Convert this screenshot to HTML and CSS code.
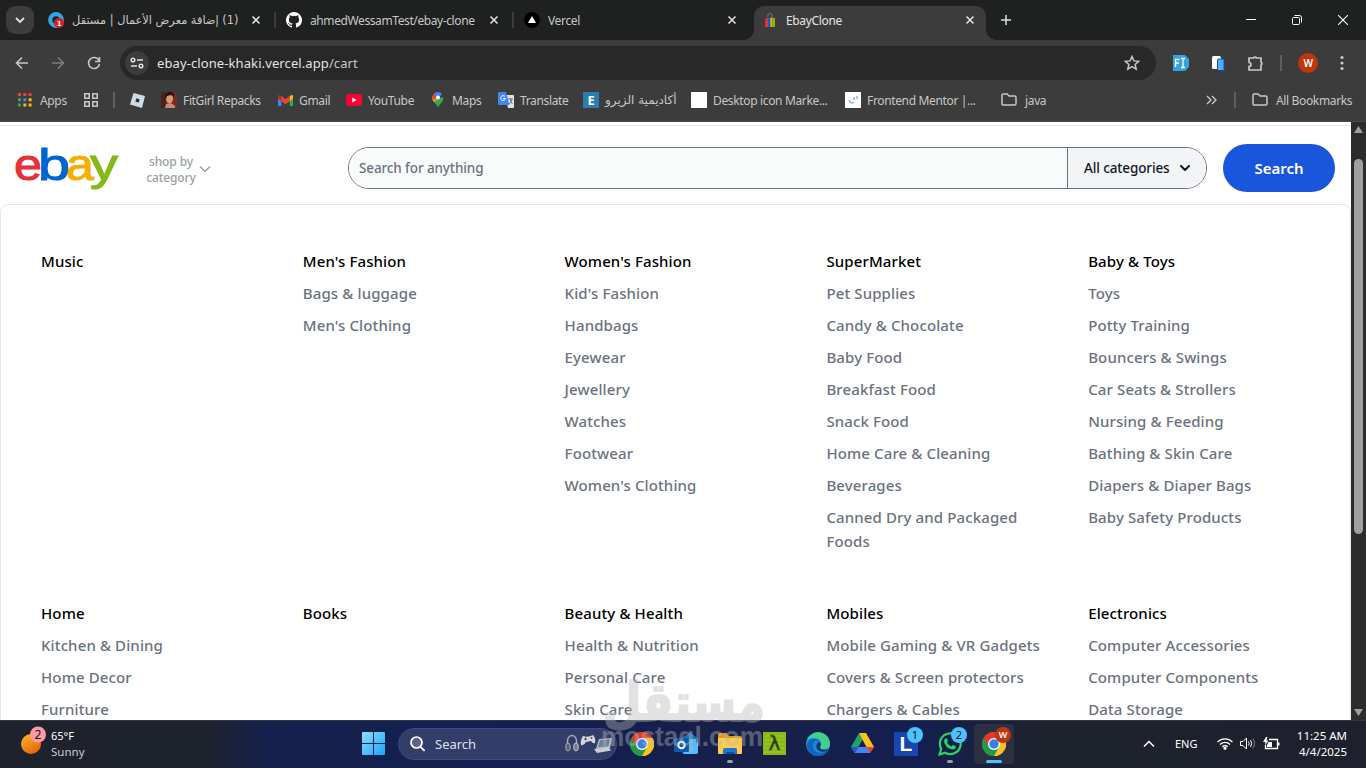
FILE: index.html
```html
<!DOCTYPE html>
<html lang="en">

<head>
  <meta charset="UTF-8">
  <meta name="viewport" content="width=device-width, initial-scale=1.0">
  <title>EbayClone</title>
  <link rel="stylesheet" href="styles.css">
</head>

<body>
  <!-- shared icons -->
  <svg class="sprite" aria-hidden="true">
    <symbol id="close" viewBox="0 0 10 10"><path d="M1.500 1.500l7 7M8.500 1.500l-7 7" stroke="#dedede" stroke-width="1.600" /></symbol>
    <symbol id="folder" viewBox="0 0 16 14"><path d="M1 2.200q0-1.200 1.200-1.200h4l1.800 2h5.800q1.200 0 1.200 1.200v6.600q0 1.200-1.200 1.200H2.200Q1 12 1 10.800z" fill="none" stroke="#c7c7c7" stroke-width="1.500" /></symbol>
    <symbol id="chrome" viewBox="0 0 24 24">
      <path d="M12 12L1.600 6A12 12 0 0 1 22.400 6z" fill="#e33b2e" />
      <path d="M12 12L22.400 6A12 12 0 0 1 12 24z" fill="#fcc31e" />
      <path d="M12 12L12 24A12 12 0 0 1 1.600 6z" fill="#249a46" />
      <path d="M12 6h10.400A12 12 0 0 1 12 24l5.200-9z" fill="#fcc31e" />
      <path d="M1.600 6l5.200 9L12 18l5.200-3L12 24A12 12 0 0 1 1.600 6z" fill="#249a46" />
      <path d="M1.600 6A12 12 0 0 1 22.400 6H12a6 6 0 0 0-5.200 9z" fill="#e33b2e" />
      <circle cx="12" cy="12" r="6" fill="#fff" />
      <circle cx="12" cy="12" r="4.700" fill="#3b7de9" />
    </symbol>
  </svg>

  <div class="browser">
    <div class="tab-strip">
      <button class="tab-search"><svg width="10" height="8" viewBox="0 0 10 8"><path d="M1 2l4 4 4-4" fill="none" stroke="#e3e3e3" stroke-width="1.800" /></svg></button>
      <div class="tab">
        <svg width="16" height="16" viewBox="0 0 16 16"><circle cx="8" cy="8" r="5.800" fill="none" stroke="#2fa8e6" stroke-width="4.200" /><circle cx="11" cy="11" r="5" fill="#d91f26" /><text x="11" y="14" class="badge-num">1</text></svg>
        <span class="tab-title arabic tab-title-ar" dir="rtl">(1) إضافة معرض الأعمال | مستقل</span>
        <svg class="close" width="10" height="10"><use href="#close" /></svg>
      </div>
      <div class="tab">
        <svg width="16" height="16" viewBox="0 0 16 16"><path fill="#fff" d="M8 0a8 8 0 0 0-2.530 15.590c.4.070.55-.17.550-.38v-1.500c-2.230.5-2.700-.94-2.700-.94-.360-.93-.89-1.170-.89-1.170-.73-.5.050-.49.050-.49.810.06 1.230.83 1.230.83.720 1.230 1.880.87 2.330.670.070-.52.280-.87.510-1.070-1.780-.2-3.640-.89-3.640-3.950 0-.87.310-1.590.82-2.150-.080-.2-.36-1.020.080-2.120 0 0 .67-.21 2.200.82a7.600 7.600 0 0 1 4 0c1.530-1.040 2.200-.82 2.200-.82.440 1.100.160 1.920.080 2.120.510.560.82 1.270.82 2.150 0 3.070-1.870 3.750-3.650 3.950.290.250.540.730.540 1.480v2.200c0 .21.150.46.550.38A8 8 0 0 0 8 0z" /></svg>
        <span class="tab-title repo">ahmedWessamTest/ebay-clone</span>
        <svg class="close" width="10" height="10"><use href="#close" /></svg>
      </div>
      <div class="tab no-line">
        <svg width="16" height="16" viewBox="0 0 16 16"><circle cx="8" cy="8" r="8" fill="#000" /><path d="M8 4l4 7H4z" fill="#fff" /></svg>
        <span class="tab-title">Vercel</span>
        <svg class="close" width="10" height="10"><use href="#close" /></svg>
      </div>
      <div class="tab active">
        <svg width="16" height="16" viewBox="0 0 16 16"><path d="M5.500 5a2.500 3.500 0 0 1 5 0" fill="none" stroke="#777" /><path d="M3.400 6h2.600v9H3z" fill="#e53238" /><path d="M6 5.500h2.300V15H6z" fill="#0064d2" /><path d="M8.300 5.500h2.200V15H8.300z" fill="#f5af02" /><path d="M10.500 6H13v9h-2.500z" fill="#86b817" /></svg>
        <span class="tab-title">EbayClone</span>
        <svg class="close" width="10" height="10"><use href="#close" /></svg>
      </div>
      <svg class="new-tab" width="12" height="12" viewBox="0 0 12 12"><path d="M6 1v10M1 6h10" stroke="#dedede" stroke-width="1.500" /></svg>
      <div class="window-buttons">
        <svg width="10" height="10" viewBox="0 0 10 10"><path d="M0 4.500h10" stroke="#fff" /></svg>
        <svg width="10" height="10" viewBox="0 0 10 10"><rect x=".5" y="2.500" width="7" height="7" rx="1" fill="none" stroke="#fff" /><path d="M2.500 .5h5a2 2 0 0 1 2 2v5" fill="none" stroke="#fff" /></svg>
        <svg width="10" height="10" viewBox="0 0 10 10"><path d="M0 0l10 10M10 0L0 10" stroke="#fff" stroke-width="1.100" /></svg>
      </div>
    </div>

    <div class="toolbar">
      <svg width="14" height="14" viewBox="0 0 14 14"><path d="M13 7H2M7 1.500L1.500 7 7 12.500" fill="none" stroke="#c7c7c7" stroke-width="1.600" /></svg>
      <svg width="14" height="14" viewBox="0 0 14 14"><path d="M1 7h11M7 1.500L12.500 7 7 12.500" fill="none" stroke="#7d7d7d" stroke-width="1.600" /></svg>
      <svg width="14" height="14" viewBox="0 0 14 14"><path d="M12 4.500A5.500 5.500 0 1 0 12.500 8M12.500 1v4.500H8" fill="none" stroke="#c7c7c7" stroke-width="1.600" /></svg>
      <div class="omnibox">
        <span class="site-info"><svg width="14" height="12" viewBox="0 0 14 12" fill="none" stroke="#dedede" stroke-width="1.500"><circle cx="3" cy="3" r="1.800" /><path d="M7 3h6M1 9h6" /><circle cx="11" cy="9" r="1.800" /></svg></span>
        <span class="url">ebay-clone-khaki.vercel.app<em>/cart</em></span>
        <svg class="star" width="16" height="16" viewBox="0 0 16 16"><path d="M8 1.500l1.900 4.400 4.800.4-3.600 3.200 1.100 4.700L8 11.700l-4.200 2.500 1.100-4.700L1.300 6.300l4.800-.4z" fill="none" stroke="#c7c7c7" stroke-width="1.500" /></svg>
      </div>
      <svg width="16" height="16" viewBox="0 0 16 16"><path d="M0 0h12l4 4v8l-4 4H0z" fill="#37a5dd" /><path d="M2.500 12V4.500h4M2.500 8h3.500M8 3.500h4M8 12.500h4M10 3.500v9" fill="none" stroke="#fff" stroke-width="1.300" /></svg>
      <svg width="14" height="16" viewBox="0 0 14 16"><rect x="1" y="1" width="9" height="13" rx="1.500" fill="#fff" /><rect x="6.500" y="4" width="6.500" height="11.500" rx="1" fill="#55aaf9" stroke="#1b4da0" /></svg>
      <svg width="17" height="17" viewBox="0 0 17 17"><path d="M2 3h4.500a1.700 1.700 0 0 1 3 0H14v4.300a1.700 1.700 0 0 1 0 3V15H2v-3.500a2 2 0 0 0 0-4z" fill="none" stroke="#c7c7c7" stroke-width="1.700" /></svg>
      <i class="divider"></i>
      <span class="avatar">W</span>
      <svg width="4" height="16" viewBox="0 0 4 16" fill="#c7c7c7"><circle cx="2" cy="2.500" r="1.600" /><circle cx="2" cy="8" r="1.600" /><circle cx="2" cy="13.500" r="1.600" /></svg>
    </div>

    <div class="bookmarks">
      <span class="bookmark apps"><svg width="14" height="14" viewBox="0 0 14 14"><path d="M0 0h3v3H0zM5.300 0h3v3h-3zM10.600 0h3v3h-3z" fill="#ea4335" /><path d="M0 5.300h3v3H0zM0 10.600h3v3H0z" fill="#34a853" /><path d="M5.300 5.300h3v3h-3z" fill="#4285f4" /><path d="M10.600 5.300h3v3h-3zM10.600 10.600h3v3h-3zM5.300 10.600h3v3h-3z" fill="#fbbc04" /></svg>Apps</span>
      <span class="bookmark"><svg width="14" height="14" viewBox="0 0 14 14"><path d="M.8.800h4.400v4.400H.8zM8.800.800h4.400v4.400H8.800zM.8 8.800h4.400v4.400H.8zM8.800 8.800h4.400v4.400H8.800z" fill="none" stroke="#c7c7c7" stroke-width="1.600" /></svg></span>
      <i class="divider"></i>
      <span class="bookmark"><svg width="15" height="15" viewBox="0 0 15 15"><path d="M3.500 0L15 3l-3 12L0 11.500z" fill="#cfdbe4" /><path d="M6.300 5.300l3.400.9-.9 3.400-3.400-.9z" fill="#333" /></svg></span>
      <span class="bookmark"><svg width="16" height="16" viewBox="0 0 16 16"><path d="M0 0h16v16H0z" fill="#7d2a22" /><path d="M0 0h5v16H0z" fill="#4b2220" /><ellipse cx="8.500" cy="6.500" rx="3.500" ry="5" fill="#d69a76" /><path d="M4 5q0-5 5-5t4 5l-3-2-4 1-1 3z" fill="#261615" /><path d="M5 12l5-1 4 3v2H4z" fill="#c38c6f" /></svg>FitGirl Repacks</span>
      <span class="bookmark gmail"><svg width="15" height="11" viewBox="0 0 15 11"><path d="M0 1.500v9.500h3.300V4z" fill="#4285f4" /><path d="M15 1.500v9.500h-3.300V4z" fill="#34a853" /><path d="M11.700.800L15 0v3.500l-3.300 2.700z" fill="#fbbc04" /><path d="M0 0l3.300.8v5.400L0 3.500z" fill="#c5221f" /><path d="M3.300.800l4.200 3.400L11.700.800v5.400L7.500 9.300 3.300 6.200z" fill="#ea4335" /></svg>Gmail</span>
      <span class="bookmark"><svg width="16" height="12" viewBox="0 0 16 12"><rect width="16" height="12" rx="3" fill="#f03" /><path d="M6.300 3.500v5L10.500 6z" fill="#fff" /></svg>YouTube</span>
      <span class="bookmark maps"><svg width="12" height="16" viewBox="0 0 12 16"><path d="M6 16C5 12 .5 10 .5 5.500h11C11.500 10 7 12 6 16z" fill="#34a853" /><path d="M6 6L2 10Q0 8 .5 4z" fill="#fbbc04" /><path d="M.5 6Q.2 1 5 .2L6 6 2 8z" fill="#ea4335" /><path d="M2 2Q6-2 10 2L6 6z" fill="#4285f4" /><circle cx="6" cy="5.500" r="2" fill="#fff" /></svg>Maps</span>
      <span class="bookmark"><svg width="16" height="16" viewBox="0 0 16 16"><path d="M7 3h8q1 0 1 1v11q0 1-1 1h-5z" fill="#dfe3e8" /><path d="M1 0h7l3.500 13H1q-1 0-1-1V1q0-1 1-1z" fill="#4285f4" /><path d="M7 4.500a2.400 2.400 0 1 0 .5 2H5.200" fill="none" stroke="#fff" /><path d="M10 7h5M12.500 6v1q0 3 2 5M14 7q0 3-3 5" fill="none" stroke="#6c7b8b" /></svg>Translate</span>
      <span class="bookmark"><b class="elzero">E</b><span class="arabic ar-mark" dir="rtl">أكاديمية الزيرو</span></span>
      <span class="bookmark"><b class="blank"></b>Desktop icon Marke...</span>
      <span class="bookmark"><svg width="16" height="16" viewBox="0 0 16 16"><path d="M0 0h16v16H0z" fill="#fff" /><path d="M4 8q1 4 5 2.500M9 5v3M12 4v3" fill="none" stroke="#8bb8d8" stroke-width="1.500" /></svg>Frontend Mentor |...</span>
      <span class="bookmark java"><svg width="16" height="14"><use href="#folder" /></svg>java</span>
      <span class="bookmark"><svg width="16" height="10" viewBox="0 0 16 10"><path d="M2 1l4 4-4 4M7 1l4 4-4 4" fill="none" stroke="#c7c7c7" stroke-width="1.400" /></svg></span>
      <i class="divider"></i>
      <span class="bookmark java"><svg width="16" height="14"><use href="#folder" /></svg>All Bookmarks</span>
    </div>
  </div>

  <div class="viewport">
    <div class="page">
      <header class="header">
        <svg class="logo" width="106" height="46" viewBox="0 0 106 46">
          <text x="-1" y="36" textLength="28" lengthAdjust="spacingAndGlyphs" fill="#e53238" stroke="#e53238">e</text>
          <text x="23" y="36" textLength="32" lengthAdjust="spacingAndGlyphs" fill="#0064d2" stroke="#0064d2">b</text>
          <text x="51" y="36" textLength="28" lengthAdjust="spacingAndGlyphs" fill="#f5af02" stroke="#f5af02">a</text>
          <text x="75" y="36" textLength="28" lengthAdjust="spacingAndGlyphs" fill="#86b817" stroke="#86b817">y</text>
        </svg>
        <button class="shop-by">
          <span>shop by<br>category</span>
          <svg width="12" height="8" viewBox="0 0 12 8"><path d="M1 1.500l5 5 5-5" fill="none" stroke="#98a2a3" stroke-width="1.500" /></svg>
        </button>
        <form class="search">
          <span class="search-input">Search for anything</span>
          <span class="search-category">All categories <svg width="10" height="7" viewBox="0 0 10 7"><path d="M1 1l4 4 4-4" fill="none" stroke="#111928" stroke-width="2" stroke-linecap="round" stroke-linejoin="round" /></svg></span>
        </form>
        <button class="search-btn">Search</button>
      </header>

      <section class="categories">
        <ul>
          <li class="title">Music</li>
        </ul>
        <ul>
          <li class="title">Men's Fashion</li>
          <li>Bags &amp; luggage</li>
          <li>Men's Clothing</li>
        </ul>
        <ul>
          <li class="title">Women's Fashion</li>
          <li>Kid's Fashion</li>
          <li>Handbags</li>
          <li>Eyewear</li>
          <li>Jewellery</li>
          <li>Watches</li>
          <li>Footwear</li>
          <li>Women's Clothing</li>
        </ul>
        <ul>
          <li class="title">SuperMarket</li>
          <li>Pet Supplies</li>
          <li>Candy &amp; Chocolate</li>
          <li>Baby Food</li>
          <li>Breakfast Food</li>
          <li>Snack Food</li>
          <li>Home Care &amp; Cleaning</li>
          <li>Beverages</li>
          <li>Canned Dry and Packaged Foods</li>
        </ul>
        <ul>
          <li class="title">Baby &amp; Toys</li>
          <li>Toys</li>
          <li>Potty Training</li>
          <li>Bouncers &amp; Swings</li>
          <li>Car Seats &amp; Strollers</li>
          <li>Nursing &amp; Feeding</li>
          <li>Bathing &amp; Skin Care</li>
          <li>Diapers &amp; Diaper Bags</li>
          <li>Baby Safety Products</li>
        </ul>
        <ul>
          <li class="title">Home</li>
          <li>Kitchen &amp; Dining</li>
          <li>Home Decor</li>
          <li>Furniture</li>
        </ul>
        <ul>
          <li class="title">Books</li>
        </ul>
        <ul>
          <li class="title">Beauty &amp; Health</li>
          <li>Health &amp; Nutrition</li>
          <li>Personal Care</li>
          <li>Skin Care</li>
        </ul>
        <ul>
          <li class="title">Mobiles</li>
          <li>Mobile Gaming &amp; VR Gadgets</li>
          <li>Covers &amp; Screen protectors</li>
          <li>Chargers &amp; Cables</li>
        </ul>
        <ul>
          <li class="title">Electronics</li>
          <li>Computer Accessories</li>
          <li>Computer Components</li>
          <li>Data Storage</li>
        </ul>
      </section>
    </div>
    <div class="scrollbar">
      <svg width="9" height="7" viewBox="0 0 9 7"><path d="M4.500 0L9 7H0z" fill="#9f9f9f" /></svg>
      <div class="thumb"></div>
      <svg width="9" height="7" viewBox="0 0 9 7"><path d="M4.500 7L9 0H0z" fill="#9f9f9f" /></svg>
    </div>
  </div>

  <div class="taskbar">
    <div class="weather">
      <svg width="28" height="30" viewBox="0 0 28 30"><defs><linearGradient id="sun" x2=".6" y2="1"><stop stop-color="#fbb72b" /><stop offset="1" stop-color="#e8660c" /></linearGradient></defs><circle cx="11" cy="18" r="10" fill="url(#sun)" /><circle cx="18" cy="8.500" r="8" fill="#ff99a4" /><text x="18" y="13" class="task-num">2</text></svg>
      <div>65°F<br><span>Sunny</span></div>
    </div>
    <svg class="start" width="23" height="23" viewBox="0 0 24 24"><defs><linearGradient id="win" x2="1" y2="1"><stop stop-color="#8edcff" /><stop offset="1" stop-color="#18a6f5" /></linearGradient></defs><path d="M1 0h10.500v11.500H0V1q0-1 1-1zM12.500 0H23q1 0 1 1v10.500H12.500zM0 12.500h11.500V24H1q-1 0-1-1zM12.500 12.500H24V23q0 1-1 1H12.500z" fill="url(#win)" /></svg>
    <div class="task-search">
      <svg width="15" height="16" viewBox="0 0 15 16"><circle cx="6.500" cy="6.500" r="5.500" fill="#59648a" stroke="#fff" stroke-width="1.700" /><path d="M10.500 10.800l4 4" stroke="#fff" stroke-width="1.800" /></svg>
      <span>Search</span>
      <svg class="search-art" width="48" height="22" viewBox="0 0 48 22"><path d="M2.500 12v-4a4.500 5.500 0 0 1 9 0v4" fill="none" stroke="#a7a9b0" stroke-width="1.500" /><ellipse cx="3" cy="14" rx="2.300" ry="4" fill="#5c606e" stroke="#aaa" /><ellipse cx="11" cy="14" rx="2.300" ry="4" fill="#76798a" stroke="#ccc" /><path d="M18 3q5 2 10-1 3 3 2 8-2 1-4-2l-5 1q-2 4-5 3-1-5 2-9z" fill="#d5d7dc" /><path d="M19 6h3M20.500 4.500v3" stroke="#555" /><circle cx="26.500" cy="5" r="1" fill="#555" /><path d="M34 6l13-1-2 10-14 1z" fill="#b3bfca" /><path d="M35 7l10-.8-1.500 7-10.500 1z" fill="#6b8193" /><path d="M29 16l15-1.500 2 3-14 2.500z" fill="#cbced3" /></svg>
    </div>
    <div class="task-icons">
      <span><svg width="24" height="24"><use href="#chrome" /></svg></span>
      <span><svg width="24" height="24" viewBox="0 0 24 24"><path d="M8 6l7-5q1-.8 2 0l6 5q1 1 1 2v12q0 2-2 2H10q-2 0-2-2z" fill="#1474c4" /><path d="M9 7h13v7l-6 4-7-4z" fill="#4bbdf2" /><path d="M24 10v10q0 2-2 2H10l-1-1z" fill="#55bcfb" /><rect y="6" width="15" height="14" rx="1.500" fill="#0d5ab0" /><circle cx="7.500" cy="13" r="3.200" fill="none" stroke="#fff" stroke-width="2" /></svg></span>
      <span class="running"><svg width="24" height="22" viewBox="0 0 24 22"><path d="M0 2q0-2 2-2h6l3 3h11q2 0 2 2v5H0z" fill="#e39a17" /><path d="M0 6q0-1 1-1h22q1 0 1 1v14q0 1-1 1H1q-1 0-1-1z" fill="#ffca4f" /><path d="M5 21v-4q0-2 2-2h10q2 0 2 2v4z" fill="#1678d2" /><path d="M8 19h8v2H8z" fill="#0d5196" /></svg></span>
      <span><svg width="23" height="23" viewBox="0 0 23 23"><path d="M0 0h23v23H0z" fill="#89b914" /><path d="M1 4h21M1 8h21M1 12h21M1 16h21M1 20h21" stroke="#a2cb36" /><text x="11.500" y="18" class="lambda">λ</text></svg></span>
      <span><svg width="24" height="24" viewBox="0 0 24 24"><circle cx="12" cy="12" r="12" fill="#178bd0" /><path d="M1 8A12 12 0 0 1 24 12q0 5-6 5-4 0-4-2 2-2 1-5-2-4-7-4-4 0-7 2z" fill="#3ed0b0" /><path d="M12 0a12 12 0 0 1 12 12q0 5-6 5-4 0-4-2 2-2 1-5Q12 4 5 4.500 8 0 12 0z" fill="#48d07a" opacity=".7" /><path d="M8 10q-3 5 1 9 5 4 12 0-4 6-11 5Q1 21 1 14q1-7 7-7 5 0 7 4-4-4-7-1z" fill="#1562bd" /><path d="M13 10q3 2 1 5 0 3 5 3l3-1-1 2q-7 2-10-2-2-5 2-7z" fill="#123273" /></svg></span>
      <span><svg width="23" height="21" viewBox="0 0 23 21"><path d="M8 0L0 14l4 6 7.500-13z" fill="#21a464" /><path d="M8 0h7l8 14h-8z" fill="#fcc31e" /><path d="M0 14h23l-4 6H4z" fill="#4285f4" /><path d="M15 14h8l-4 6z" fill="#e94235" /><path d="M0 14h8l-4 6z" fill="#2459cf" /><path d="M11.500 7l4 7h-8z" fill="#18214d" /></svg></span>
      <span><b class="l-app">L</b><em class="badge">1</em></span>
      <span class="running"><svg width="24" height="24" viewBox="0 0 24 24"><path d="M1.500 22.500l1.700-5.700a10.400 10.400 0 1 1 4 4z" fill="none" stroke="#25d366" stroke-width="2.200" /><path d="M8 6q1 0 2 3l-1 1.500q1.500 3 4.500 4L15 13q3 1 3 2-1 3-4 2.500-7-2-8-8Q6 7 8 6z" fill="#25d366" /></svg><em class="badge">2</em></span>
      <span class="current"><svg width="24" height="24"><use href="#chrome" /></svg><em class="badge profile">W</em></span>
    </div>
    <div class="tray">
      <svg width="12" height="8" viewBox="0 0 12 8"><path d="M1 6.500l5-5 5 5" fill="none" stroke="#fff" stroke-width="1.500" /></svg>
      <span class="lang">ENG</span>
      <svg width="16" height="13" viewBox="0 0 16 13" fill="none" stroke="#fff" stroke-width="1.300"><path d="M.5 5a10.500 10.500 0 0 1 15 0M3 7.500a7 7 0 0 1 10 0M5.300 9.800a3.800 3.800 0 0 1 5.400 0" /><circle cx="8" cy="11.200" r="1" fill="#fff" /></svg>
      <svg width="16" height="13" viewBox="0 0 16 13" fill="none" stroke="#fff"><path d="M.5 4.500h2.500L6.500 1v11L3 8.500H.5zM8.500 4.500q1.500 2 0 4M10.500 3q2.500 3.500 0 7" /><path d="M12.800 1.500q3.500 5 0 10" stroke="#777b85" /></svg>
      <svg width="17" height="13" viewBox="0 0 17 13"><path d="M6 2.500h8.500v9h-12V8" fill="none" stroke="#fff" stroke-width="1.300" /><path d="M15 5.500h1.500v3H15zM5.500 5H9v5H4V8z" fill="#fff" /><path d="M3 0L0 5h2.500L2 8.500 5.500 3.500H3.500L4.500 0z" fill="#fff" /></svg>
      <div class="clock">11:25 AM<br>4/4/2025</div>
    </div>
  </div>

  <!-- watermark lies over the page and the taskbar -->
  <svg class="watermark" width="170" height="80" viewBox="0 0 170 80">
    <text x="84" y="49" text-anchor="middle" class="wm-ar" textLength="162" lengthAdjust="spacingAndGlyphs">مستقل</text>
    <text x="1" y="74" class="wm-en" textLength="162" lengthAdjust="spacingAndGlyphs">mostaql.com</text>
  </svg>
</body>

</html>
```
FILE: styles.css
```css
* {
  margin: 0;
  padding: 0;
  box-sizing: border-box;
}

body {
  width: 1366px;
  height: 768px;
  overflow: hidden;
  display: flex;
  flex-direction: column;
  font-family: "Noto Sans", "Open Sans", sans-serif;
  background: #fff;
}

svg {
  display: block;
  flex-shrink: 0;
}

button {
  border: 0;
  background: none;
  font-family: inherit;
}

ul {
  list-style: none;
}

em,
i {
  font-style: normal;
}

.sprite {
  position: absolute;
  width: 0;
  height: 0;
}

.arabic {
  font-family: "DejaVu Sans", sans-serif;
  letter-spacing: 0;
}

/* browser */
.browser {
  height: 121px;
  background: #3c3c3c;
  color: #c7c7c7;
  font-size: 12px;
  letter-spacing: -.35px;
}

.tab-strip {
  height: 40px;
  display: flex;
  align-items: center;
  background: #1f2020;
  padding-left: 6px;
}

.tab-search {
  width: 28px;
  height: 28px;
  margin-right: 6px;
  border-radius: 9px;
  background: #3c3c3c;
  display: flex;
  align-items: center;
  justify-content: center;
}

.tab {
  position: relative;
  width: 238px;
  height: 34px;
  margin-top: 6px;
  padding: 0 17px 6px 8px;
  display: flex;
  align-items: center;
  gap: 8px;
}

.tab::after {
  content: "";
  position: absolute;
  right: 2px;
  top: 6px;
  width: 2px;
  height: 16px;
  background: #3c3c3c;
}

.tab.no-line::after {
  display: none;
}

.tab.active {
  width: 232px;
  padding-right: 11px;
  background: #3c3c3c;
  border-radius: 10px 10px 0 0;
  color: #e3e3e3;
}

.tab.active::before,
.tab.active::after {
  content: "";
  position: absolute;
  top: auto;
  bottom: 0;
  width: 10px;
  height: 10px;
}

.tab.active::before {
  left: -10px;
  background: radial-gradient(circle at 0 0, transparent 9.500px, #3c3c3c 10px);
}

.tab.active::after {
  right: -10px;
  background: radial-gradient(circle at 100% 0, transparent 9.500px, #3c3c3c 10px);
}

.tab-title {
  white-space: nowrap;
}

.tab-title.repo {
  letter-spacing: -.4px;
}

.tab-title-ar {
  font-size: 11.400px;
}

.close {
  margin-left: auto;
}

.badge-num {
  font: bold 8px "Liberation Sans", sans-serif;
  fill: #fff;
  text-anchor: middle;
}

.new-tab {
  margin-left: 14px;
}

.window-buttons {
  margin-left: auto;
  margin-right: 18px;
  display: flex;
  gap: 36px;
}

.toolbar {
  height: 46px;
  padding: 0 20px 0 15px;
  display: flex;
  align-items: center;
  gap: 22px;
}

.omnibox {
  width: 1036px;
  height: 34px;
  margin-left: -3px;
  margin-right: -5px;
  padding: 0 16px 0 5px;
  border-radius: 17px;
  background: #282828;
  display: flex;
  align-items: center;
}

.site-info {
  width: 24px;
  height: 24px;
  border-radius: 50%;
  background: #3c3c3c;
  display: flex;
  align-items: center;
  justify-content: center;
}

.url {
  margin-left: 8px;
  font-size: 13px;
  letter-spacing: .1px;
  color: #e3e3e3;
}

.url em {
  color: #c7c7c7;
}

.star {
  margin-left: auto;
}

.divider {
  width: 2px;
  height: 16px;
  background: #5e5e5a;
}

.toolbar .divider {
  margin: 0 -6px;
}

.avatar {
  width: 20px;
  height: 20px;
  border-radius: 50%;
  background: #bf360c;
  color: #fff;
  font-size: 10px;
  font-weight: 600;
  line-height: 20px;
  text-align: center;
}

.bookmarks {
  height: 28px;
  padding-left: 18px;
  display: grid;
  grid-template-columns: 66px 29px 17px 31px 117px 68px 85px 67px 85px 108px 154px 156px 204px 29px 18px 110px;
  align-items: center;
}

.bookmark {
  display: flex;
  align-items: center;
  gap: 6px;
  white-space: nowrap;
}

.bookmark.apps,
.bookmark.java,
.bookmark.maps {
  gap: 8px;
}

.bookmark.maps {
  padding-left: 1px;
}

.elzero,
.blank {
  width: 16px;
  height: 16px;
  background: #fff;
}

.elzero {
  background: #2b7cb3;
  color: #fff;
  font-size: 13px;
  line-height: 16px;
  text-align: center;
}

/* page */
.viewport {
  height: 599px;
  display: flex;
  border-top: 1px solid #4a4a4a;
}

.page {
  width: 1351px;
  overflow: hidden;
  padding-top: 3px;
}

.header {
  height: 79px;
  border-top: 1px solid #e5e7eb;
  padding: 6px 16px 0 15px;
  display: flex;
  align-items: center;
}

.logo {
  margin-top: -2px;
  overflow: visible;
  font: 45px "Liberation Sans", sans-serif;
  stroke-width: 1px;
}

.shop-by {
  margin-left: 25px;
  display: flex;
  align-items: center;
  gap: 3px;
  font-size: 12px;
  font-weight: 500;
  line-height: 16px;
  letter-spacing: -.1px;
  color: #98a2a3;
  margin-top: 3px;
}

.shop-by span {
  width: 50px;
  display: flex;
  justify-content: center;
}

.shop-by svg {
  margin-bottom: 2px;
}

.search {
  width: 859px;
  height: 42px;
  margin-left: auto;
  display: flex;
  border: 1px solid #6b7280;
  border-radius: 21px;
  overflow: hidden;
  font-size: 13.500px;
  font-weight: 500;
  line-height: 40px;
  letter-spacing: -.12px;
}

.search-input {
  flex: 1;
  padding-left: 10px;
  background: #f9fbfb;
  color: #6b7280;
}

.search-category {
  width: 139px;
  padding-left: 16px;
  border-left: 1px solid #6b7280;
  background: #f3f4f6;
  color: #111928;
  display: flex;
  align-items: center;
  gap: 10px;
  white-space: nowrap;
}

.search-btn {
  width: 112px;
  height: 48px;
  margin-left: 16px;
  border-radius: 24px;
  background: #1a56db;
  color: #fff;
  font-size: 15px;
  font-weight: 600;
}

.categories {
  height: 700px;
  padding: 44px 40px;
  border: 1px solid #e5e7eb;
  border-radius: 8px;
  display: grid;
  grid-template-columns: repeat(5, 1fr);
  align-content: start;
  gap: 48px 40px;
  font-size: 15px;
  font-weight: 500;
  line-height: 24px;
  letter-spacing: .12px;
  color: #6b7280;
}

.categories li + li {
  margin-top: 8px;
}

.categories .title {
  color: #000;
}

.scrollbar {
  width: 15px;
  background: #2c2c2c;
  display: flex;
  flex-direction: column;
  align-items: center;
  padding: 4px 0 4px;
}

.thumb {
  width: 9px;
  height: 375px;
  margin: 26px 0 auto;
  border-radius: 5px;
  background: #9f9f9f;
}

/* taskbar */
.taskbar {
  height: 48px;
  padding-bottom: 2px;
  display: flex;
  align-items: center;
  background: linear-gradient(90deg, #1e222c 0, #1e222c 200px, #14214d 270px, #131f52 560px, #182048 760px, #131f50 920px, #1d222d 1040px, #1e212d 1366px);
  border-top: 1px solid #343846;
  color: #fff;
  font-size: 11px;
  line-height: 16px;
}

.weather {
  width: 362px;
  padding-left: 20px;
  display: flex;
  align-items: center;
  gap: 3px;
}

.weather svg {
  margin-top: -5px;
}

.weather span {
  font-size: 11.500px;
  color: #c8cad0;
}

.task-num {
  font-size: 12px;
  fill: #111;
  text-anchor: middle;
}

.task-search {
  width: 219px;
  height: 32px;
  margin-left: 13px;
  padding: 0 3px 0 11px;
  border: 1px solid #424c76;
  border-radius: 16px;
  background: #323d6a;
  display: flex;
  align-items: center;
  gap: 10px;
  font-size: 13px;
  color: #dfe1e9;
}

.search-art {
  margin-left: auto;
}

.task-icons {
  margin-left: 5px;
  display: flex;
  gap: 4px;
}

.task-icons span {
  position: relative;
  width: 40px;
  height: 40px;
  display: flex;
  align-items: center;
  justify-content: center;
}

.running::after,
.current::after {
  content: "";
  position: absolute;
  left: 17px;
  bottom: 1px;
  width: 6px;
  height: 3px;
  border-radius: 2px;
  background: #9ba0ad;
}

.current {
  background: #2b3142;
  border-radius: 4px;
}

.current::after {
  left: 12px;
  width: 16px;
  background: #4cc2ff;
}

.lambda {
  font: 20px "DejaVu Sans", sans-serif;
  fill: #2c3e0c;
  stroke: #2c3e0c;
  stroke-width: .5px;
  text-anchor: middle;
}

.l-app {
  width: 24px;
  height: 24px;
  background: #1746ae;
  font: bold 21px/24px "Liberation Sans", sans-serif;
  text-align: center;
}

.badge {
  position: absolute;
  right: 3px;
  top: 3px;
  width: 16px;
  height: 16px;
  border-radius: 50%;
  background: #4cc2ff;
  color: #111;
  font-size: 11px;
  line-height: 16px;
  text-align: center;
}

.badge.profile {
  background: #bf360c;
  color: #fff;
  font-size: 9px;
  font-weight: 600;
}

.tray {
  margin-left: auto;
  padding-right: 19px;
  display: flex;
  align-items: center;
  gap: 7px;
}

.lang {
  width: 35px;
  margin-left: 13px;
}

.clock {
  width: 60px;
  font-size: 11.500px;
  text-align: right;
}

.watermark {
  position: absolute;
  left: 600px;
  top: 672px;
  fill: #b8b8b8;
  opacity: .4;
}

.wm-ar {
  font: bold 54px "DejaVu Sans", sans-serif;
  stroke: #b8b8b8;
  stroke-width: 2px;
  stroke-linejoin: round;
}

.wm-en {
  font: bold 27px "Liberation Sans", sans-serif;
}
```
